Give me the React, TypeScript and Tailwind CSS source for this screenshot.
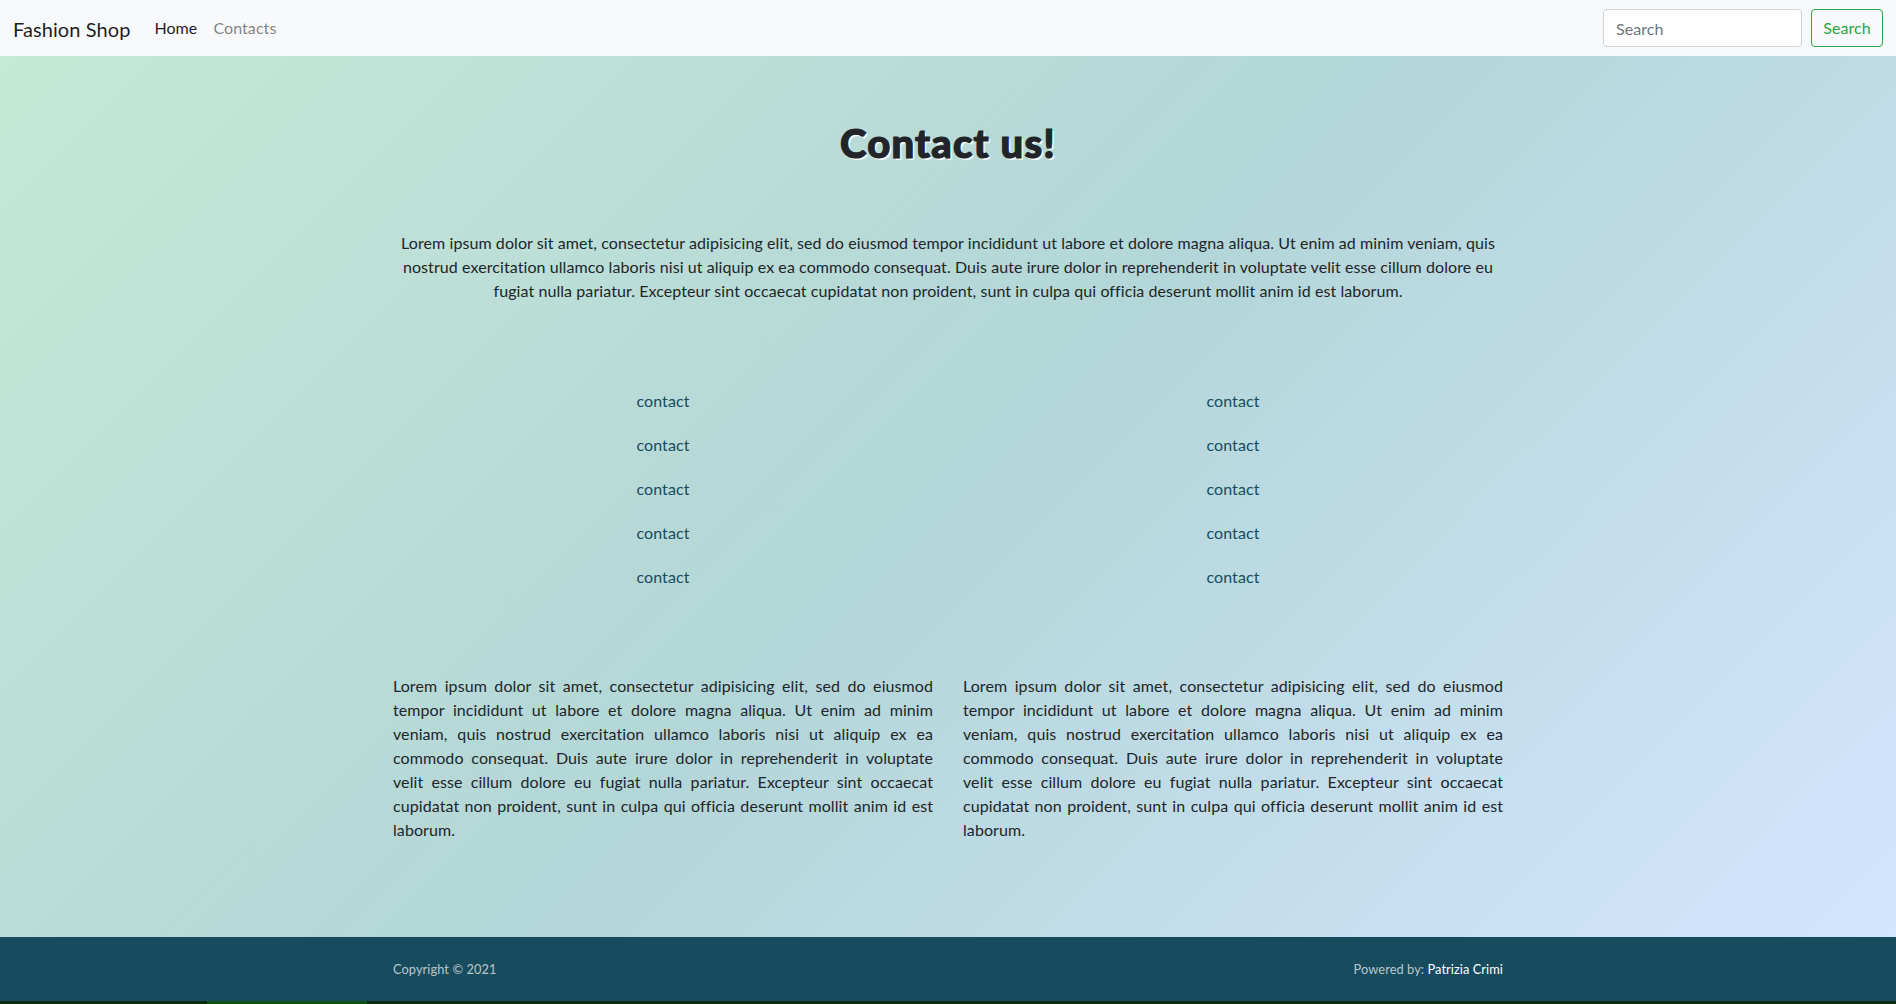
import React from 'react';

const lorem =
  'Lorem ipsum dolor sit amet, consectetur adipisicing elit, sed do eiusmod tempor incididunt ut labore et dolore magna aliqua. Ut enim ad minim veniam, quis nostrud exercitation ullamco laboris nisi ut aliquip ex ea commodo consequat. Duis aute irure dolor in reprehenderit in voluptate velit esse cillum dolore eu fugiat nulla pariatur. Excepteur sint occaecat cupidatat non proident, sunt in culpa qui officia deserunt mollit anim id est laborum.';

const contacts = ['contact', 'contact', 'contact', 'contact', 'contact'];

function Navbar() {
  return (
    <nav className="h-14 bg-[#f8f9fa] flex items-center justify-between px-[13px]">
      <div className="flex items-center">
        <a href="#" className="text-[20px] leading-[30px] text-black/90 mr-4 pt-[1px]">
          Fashion Shop
        </a>
        <ul className="flex items-center">
          <li>
            <a href="#" className="block px-2 py-2 text-black/90">
              Home
            </a>
          </li>
          <li>
            <a href="#" className="block px-2 py-2 text-black/50">
              Contacts
            </a>
          </li>
        </ul>
      </div>
      <form className="flex items-center" onSubmit={(e) => e.preventDefault()}>
        <input
          type="search"
          placeholder="Search"
          className="w-[199px] h-[38px] px-3 mr-[9px] bg-white border border-[#ced4da] rounded text-[#495057] placeholder-[#6c757d] outline-none"
        />
        <button
          type="submit"
          className="w-[72px] h-[38px] border border-[#28a745] text-[#28a745] rounded"
        >
          Search
        </button>
      </form>
    </nav>
  );
}

export default function App() {
  return (
    <div className="min-h-screen flex flex-col text-[16px] leading-6 tracking-[0.08px] text-[#212529] font-['Lato','Open_Sans',sans-serif]">
      <Navbar />

      <main className="flex-1 bg-[linear-gradient(135deg,#c6e8d6,#b3d6d8_50%,#d4e5ff)] pt-[63px] pb-[94px]">
        <div className="max-w-[1140px] mx-auto px-[15px]">
          <h1 className="text-center text-[40px] leading-[48px] font-black tracking-[1.2px] text-[#212529] [-webkit-text-stroke:1.2px_#212529] [text-shadow:2px_2px_1px_#ffffff]">
            Contact us!
          </h1>

          <p className="mt-16 text-center">{lorem}</p>

          <div className="mt-[86px] grid grid-cols-2 -mx-[15px]">
            {[0, 1].map((col) => (
              <ul key={col} className="flex flex-col items-center gap-5">
                {contacts.map((c, i) => (
                  <li key={i}>
                    <a href="#" className="text-[#164c5e]">
                      {c}
                    </a>
                  </li>
                ))}
              </ul>
            ))}
          </div>

          <div className="mt-[85px] grid grid-cols-2 -mx-[15px]">
            <p className="px-[15px] text-justify">{lorem}</p>
            <p className="px-[15px] text-justify">{lorem}</p>
          </div>
        </div>
      </main>

      <footer className="h-16 bg-[#164c5e]">
        <div className="max-w-[1140px] h-full mx-auto px-[15px] flex items-center justify-between text-[12.8px]">
          <span className="text-white/70">Copyright © 2021</span>
          <span className="text-white/70">
            Powered by: <span className="text-white">Patrizia Crimi</span>
          </span>
        </div>
      </footer>

      <div className="h-[3px] flex bg-[#0b2b12]">
        <div className="w-[207px]" />
        <div className="w-[160px] bg-[#0f5216]" />
      </div>
    </div>
  );
}
